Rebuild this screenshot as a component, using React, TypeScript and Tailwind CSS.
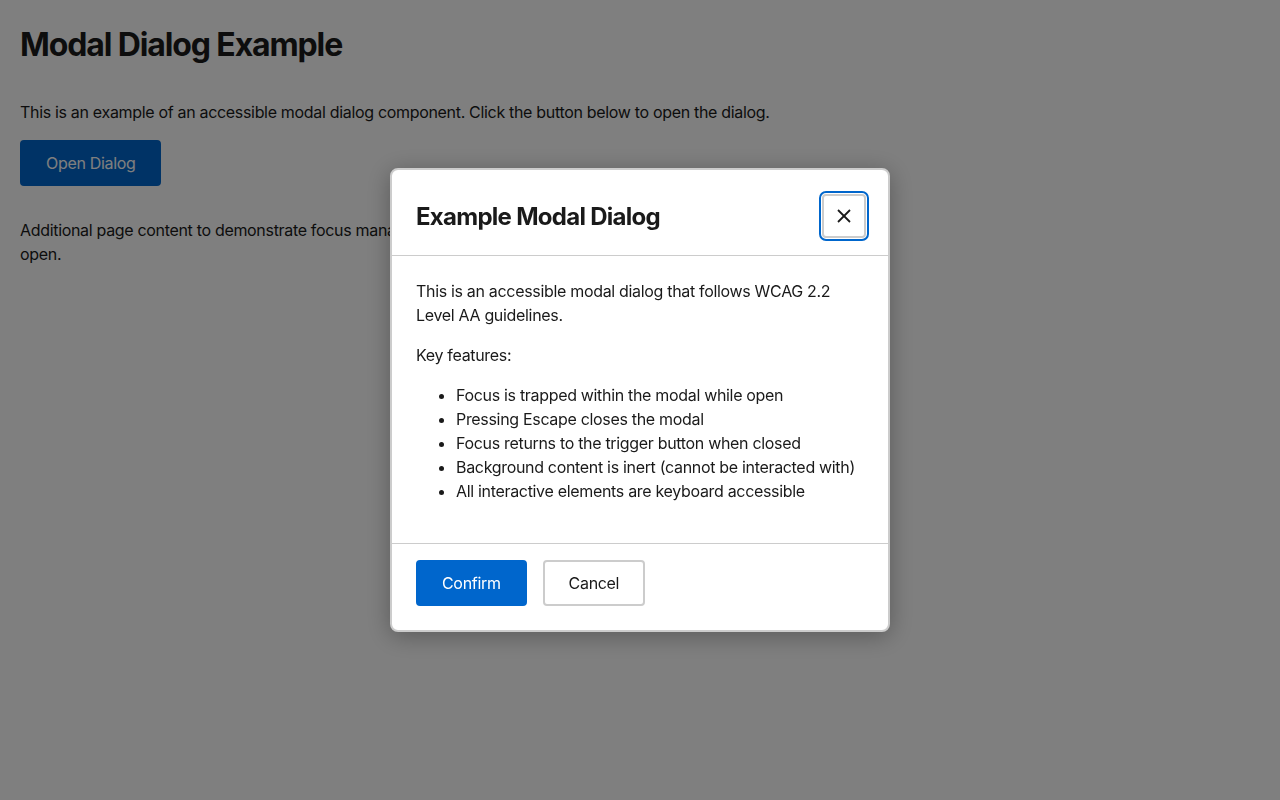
import { useState } from 'react';

const features = [
    'Focus is trapped within the modal while open',
    'Pressing Escape closes the modal',
    'Focus returns to the trigger button when closed',
    'Background content is inert (cannot be interacted with)',
    'All interactive elements are keyboard accessible',
];

export default function App() {
    const [open, setOpen] = useState(true);

    return (
        <div className="min-h-screen bg-white text-[#1a1a1a] font-['Inter',sans-serif] text-base leading-6 tracking-[-0.02em]">
            {/* Page content */}
            <main className="max-w-[840px] px-5 pt-5">
                <h1 className="text-[32px] leading-[50px] font-bold tracking-[-0.035em] mb-[30px]">Modal Dialog Example</h1>
                <p className="mb-4">
                    This is an example of an accessible modal dialog component. Click the button below to open the dialog.
                </p>
                <button
                    type="button"
                    onClick={() => setOpen(true)}
                    className="bg-[#0066cc] text-white px-6 py-[9px] border-2 border-[#0066cc] rounded"
                >
                    Open Dialog
                </button>
                <p className="mt-8 max-w-[790px]">
                    Additional page content to demonstrate focus management. This content should be inert while the modal is open.
                </p>
            </main>

            {open && (
                <div className="fixed inset-0 bg-black/50 flex items-center justify-center">
                    <div
                        role="dialog"
                        aria-modal="true"
                        aria-labelledby="modal-title"
                        className="w-[500px] bg-white border-2 border-[#cccccc] rounded-lg shadow-[0_4px_24px_rgba(0,0,0,0.3)]"
                    >
                        {/* Header */}
                        <div className="flex items-center justify-between px-6 pt-6 pb-[17px] border-b border-[#cccccc]">
                            <h2 id="modal-title" className="text-2xl font-bold tracking-[-0.03em] pt-[2px]">Example Modal Dialog</h2>
                            <button
                                type="button"
                                aria-label="Close dialog"
                                onClick={() => setOpen(false)}
                                className="w-11 h-11 -mr-[2px] flex items-center justify-center bg-white border-2 border-[#cccccc] rounded outline-2 outline-offset-1 outline-[#0066cc] outline-solid"
                            >
                                <svg width="16" height="16" viewBox="0 0 16 16" fill="none" stroke="#1a1a1a" strokeWidth="1.8">
                                    <line x1="2" y1="2" x2="14" y2="14" />
                                    <line x1="14" y1="2" x2="2" y2="14" />
                                </svg>
                            </button>
                        </div>

                        {/* Body */}
                        <div className="p-6 pt-[23px]">
                            <p className="mb-4">This is an accessible modal dialog that follows WCAG 2.2 Level AA guidelines.</p>
                            <p className="mb-4">Key features:</p>
                            <ul className="list-disc pl-10 mb-4">
                                {features.map((f) => (
                                    <li key={f}>{f}</li>
                                ))}
                            </ul>
                        </div>

                        {/* Footer */}
                        <div className="flex gap-4 px-6 pt-4 pb-6 border-t border-[#cccccc]">
                            <button
                                type="button"
                                className="bg-[#0066cc] text-white px-6 py-[9px] border-2 border-[#0066cc] rounded"
                            >
                                Confirm
                            </button>
                            <button
                                type="button"
                                onClick={() => setOpen(false)}
                                className="bg-white text-[#1a1a1a] px-6 py-[9px] border-2 border-[#cccccc] rounded"
                            >
                                Cancel
                            </button>
                        </div>
                    </div>
                </div>
            )}
        </div>
    );
}
